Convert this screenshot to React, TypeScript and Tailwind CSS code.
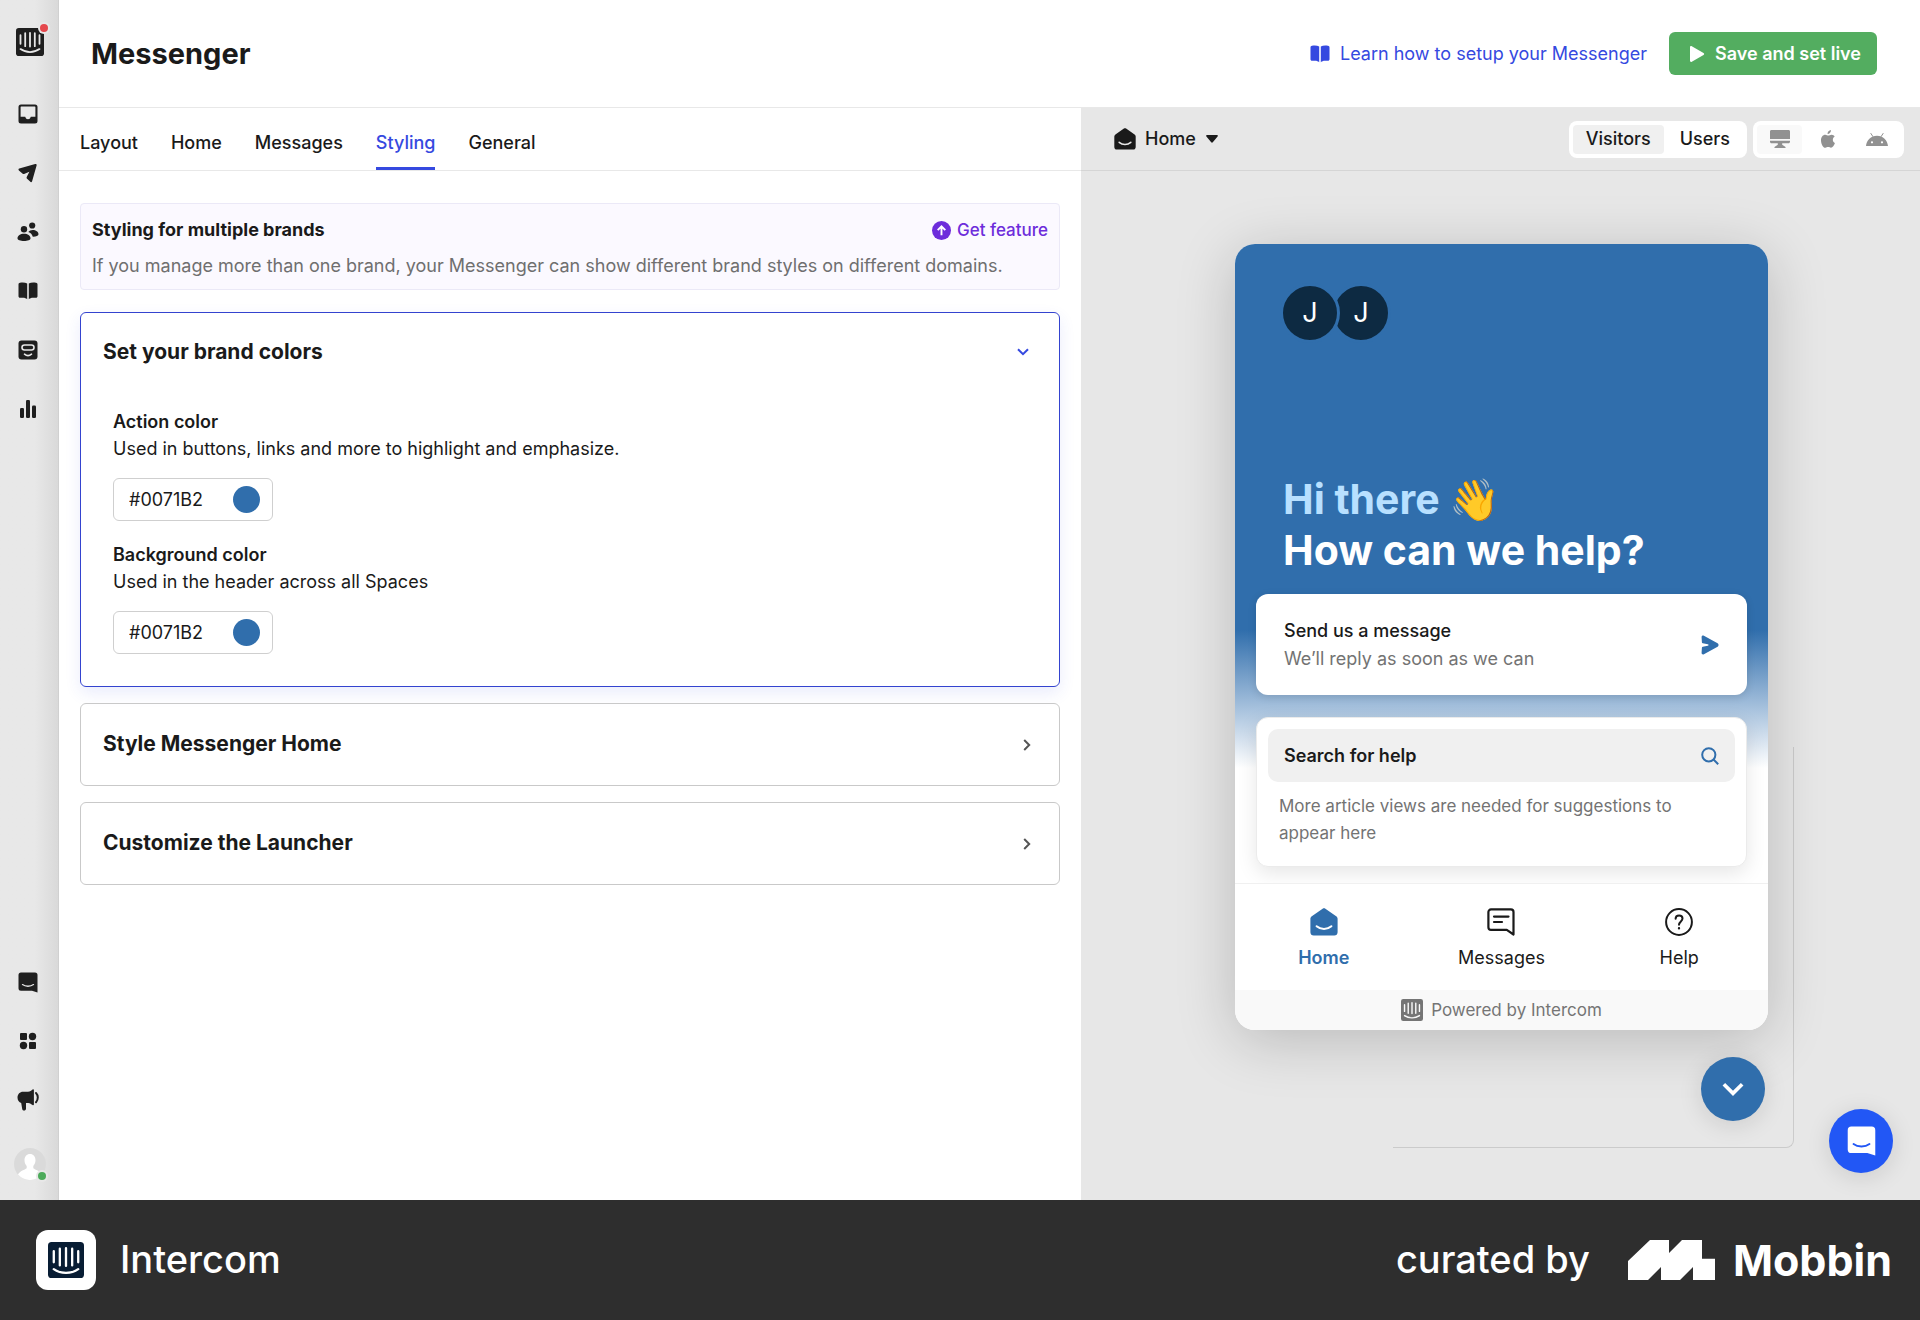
import React, { useState } from 'react';

type IconProps = { className?: string };

const IntercomLogo = ({ className }: IconProps) => (
  <svg viewBox="0 0 28 28" className={className} fill="none" aria-hidden="true">
    <rect width="28" height="28" rx="2.800" fill="currentColor" />
    <g className="stroke-[var(--cut)]" strokeWidth="1.800" strokeLinecap="round">
      <path d="M4.500 7.200v8.600M9.200 5.200v13M14 4.800v13.800M18.800 5.200v13M23.500 7.200v8.600" />
      <path d="M4.500 21.100c5.400 3.900 13.600 3.900 19 0" />
    </g>
  </svg>
);

const InboxIcon = ({ className }: IconProps) => (
  <svg viewBox="0 0 20 20" className={className} aria-hidden="true">
    <path
      fill="currentColor"
      fillRule="evenodd"
      d="M3 .5h14A2.500 2.500 0 0 1 19.500 3v14a2.500 2.500 0 0 1-2.500 2.500H3A2.500 2.500 0 0 1 .5 17V3A2.500 2.500 0 0 1 3 .5zM2.600 3v9.800h4.600c.5 1.700 1.500 2.500 2.800 2.500s2.300-.8 2.800-2.500h4.600V3a.6.6 0 0 0-.6-.6H3.200a.6.6 0 0 0-.6.600z"
    />
  </svg>
);

const OutboundIcon = ({ className }: IconProps) => (
  <svg viewBox="0 0 20 20" className={className} fill="currentColor" aria-hidden="true">
    <path d="M1.300 5.600 17.200 1.100c1-.3 1.700.4 1.400 1.400l-4.500 15.800c-.3 1-1.400 1.100-2 .3l-3.300-3.200c-.3-.5-.3-.9-.1-1.400l2.700-5.300-5.300 2.300c-.6.200-1 .1-1.400-.3L.9 7.500c-.7-.7-.5-1.600.4-1.900z" />
  </svg>
);

const ContactsIcon = ({ className }: IconProps) => (
  <svg viewBox="0 0 22 20" className={className} fill="currentColor" aria-hidden="true">
    <circle cx="7" cy="7.200" r="3.200" />
    <circle cx="15.200" cy="3.500" r="3.100" />
    <path d="M.5 16.300c0-2.500 2.800-4.500 6.500-4.500s6.500 2 6.500 4.500c0 1.800-2.900 2.700-6.500 2.700S.5 18.100.500 16.300z" />
    <path d="M11.300 10c1-1.100 2.500-1.900 4.400-1.900 3.200 0 5.800 1.900 5.800 4.200 0 1.500-2.400 2.600-5.700 2.500-.6-2.400-2.100-4-4.500-4.800z" />
  </svg>
);

const BookIcon = ({ className }: IconProps) => (
  <svg viewBox="0 0 20 18" className={className} fill="currentColor" aria-hidden="true">
    <path d="M2 .8c3-.5 5.500-.2 7.200.8v15.600c-1.200-1-2.500-1.500-4-1.500H2c-.9 0-1.500-.6-1.500-1.500V2.400C.5 1.500 1.100.9 2 .8z" />
    <path d="M18 .8c-3-.5-5.500-.2-7.200.8v15.600c1.200-1 2.500-1.500 4-1.500H18c.9 0 1.500-.6 1.500-1.500V2.400c0-.9-.6-1.500-1.500-1.600z" />
  </svg>
);

const OperatorIcon = ({ className }: IconProps) => (
  <svg viewBox="0 0 20 20" className={className} fill="none" aria-hidden="true">
    <rect x=".5" y=".5" width="19" height="19" rx="3" fill="currentColor" />
    <rect x="4" y="5" width="12" height="5" rx="2.500" stroke="#e8e8e8" strokeWidth="1.600" />
    <path d="M6.500 14.200c2 1.700 5 1.700 7 0" stroke="#e8e8e8" strokeWidth="1.600" strokeLinecap="round" />
  </svg>
);

const ReportsIcon = ({ className }: IconProps) => (
  <svg viewBox="0 0 18 20" className={className} fill="currentColor" aria-hidden="true">
    <rect x="1" y="9" width="4" height="10" rx="1.200" />
    <rect x="7" y="1" width="4" height="18" rx="1.200" />
    <rect x="13" y="6.500" width="4" height="12.500" rx="1.200" />
  </svg>
);

const MessengerIcon = ({ className }: IconProps) => (
  <svg viewBox="0 0 20 21" className={className} fill="none" aria-hidden="true">
    <path
      d="M3 .5h14A2.500 2.500 0 0 1 19.500 3v17.500L14 18.800H3A2.500 2.500 0 0 1 .5 16.300V3A2.500 2.500 0 0 1 3 .5z"
      fill="currentColor"
    />
    <path
      d="M4.500 12.600c2.900 2.200 8 2.200 11 0"
      className="stroke-[var(--cut)]"
      strokeWidth="1.300"
      strokeLinecap="round"
    />
  </svg>
);

const AppsIcon = ({ className }: IconProps) => (
  <svg viewBox="0 0 18 18" className={className} fill="currentColor" aria-hidden="true">
    <rect x="1" y="1" width="7" height="7" rx="1" />
    <circle cx="13.500" cy="4.500" r="3.700" />
    <circle cx="4.500" cy="13.500" r="3.700" />
    <rect x="10" y="10" width="7" height="7" rx="1" />
  </svg>
);

const MegaphoneIcon = ({ className }: IconProps) => (
  <svg viewBox="0 0 22 22" className={className} fill="none" aria-hidden="true">
    <path
      d="M6 2.800h5c2-.2 3.500-1 4.600-2.200.5-.5 1.300-.2 1.300.5v14.500c0 .7-.8 1-1.300.5-1.200-1.200-2.600-1.900-4.300-2.200H9v5.800c0 2.300-3.400 2.400-3.800.2L4.200 14C2 13.300.5 11.200.5 8.500.5 5.200 3 2.800 6 2.800z"
      fill="currentColor"
    />
    <path d="M19 4c2.400 2.400 2.400 6.700 0 9.200" stroke="currentColor" strokeWidth="2" strokeLinecap="round" />
  </svg>
);

const HomeIcon = ({ className }: IconProps) => (
  <svg viewBox="0 0 28 28" className={className} fill="none" aria-hidden="true">
    <path
      d="M12.600.7c.9-.6 1.900-.6 2.800 0l10.800 7.600c1 .7 1.400 1.500 1.400 2.600v13.300c0 2-1.300 3.300-3.300 3.300H3.700c-2 0-3.300-1.300-3.300-3.300V10.900c0-1.100.5-1.900 1.400-2.600z"
      fill="currentColor"
    />
    <path
      d="M6.600 18.200c4.200 3.600 10.600 3.600 14.800 0"
      className="stroke-[var(--cut)]"
      strokeWidth="2"
      strokeLinecap="round"
    />
  </svg>
);

const MessagesIcon = ({ className }: IconProps) => (
  <svg viewBox="0 0 28 28" className={className} fill="none" stroke="currentColor" strokeWidth="2.200" aria-hidden="true">
    <path d="M26.500 26.500V4a2.600 2.600 0 0 0-2.600-2.600H4A2.600 2.600 0 0 0 1.400 4v15.300A2.600 2.600 0 0 0 4 21.900h15.800z" strokeLinejoin="round" />
    <path d="M7 8.600h14.500M7 14h8" strokeLinecap="round" />
  </svg>
);

const HelpIcon = ({ className }: IconProps) => (
  <svg viewBox="0 0 28 28" className={className} fill="none" stroke="currentColor" strokeWidth="2" strokeLinecap="round" aria-hidden="true">
    <circle cx="14" cy="14" r="12.900" />
    <path d="M10.600 10.800c0-2 1.500-3.300 3.500-3.300s3.400 1.300 3.400 3.100c0 2.700-3.500 3-3.500 6.200" />
    <circle cx="14" cy="20.300" r=".6" fill="currentColor" strokeWidth="1.200" />
  </svg>
);

const DesktopIcon = ({ className }: IconProps) => (
  <svg viewBox="0 0 20 18" className={className} fill="currentColor" aria-hidden="true">
    <path d="M1.500 0h17c.8 0 1.500.6 1.500 1.400V9H0V1.400C0 .6.7 0 1.500 0zM0 10.800h20v.9c0 .8-.7 1.500-1.500 1.500h-6.300v1.600l3 2c.9.600.6 1.200-.2 1.200H5c-.8 0-1.100-.6-.2-1.200l3-2v-1.600H1.500c-.8 0-1.500-.7-1.500-1.500z" />
  </svg>
);

const AppleIcon = ({ className }: IconProps) => (
  <svg viewBox="0 0 16 20" className={className} fill="currentColor" aria-hidden="true">
    <path d="M11.300 0c.2 2.300-1.700 4.500-3.800 4.400C7.300 2.300 9.200.2 11.300 0zM15.700 14.500c-.9 2.500-2.600 5.300-4.400 5.300-1.200 0-1.600-.8-3.100-.8-1.500 0-2 .8-3.100.8C2.700 19.900.2 15.300.2 11.300.2 7.700 2.500 5.300 5 5.300c1.300 0 2.300.9 3.400.9 1 0 2.100-1 3.800-.9 1.300.1 2.500.7 3.200 1.800-2.900 1.800-2.500 6 .3 7.400z" />
  </svg>
);

const AndroidIcon = ({ className }: IconProps) => (
  <svg viewBox="0 0 22 13" className={className} aria-hidden="true">
    <path d="M6.800 3.400 4.900.5M15.200 3.400l1.900-2.900" stroke="currentColor" strokeWidth="1" strokeLinecap="round" />
    <path
      fill="currentColor"
      fillRule="evenodd"
      d="M0 13C.4 7 5 2.700 11 2.700S21.600 7 22 13zM6 8.200a1.100 1.100 0 1 0 0 2.200 1.100 1.100 0 0 0 0-2.200zm10 0a1.100 1.100 0 1 0 0 2.200 1.100 1.100 0 0 0 0-2.200z"
    />
  </svg>
);

const Chevron = ({ className }: IconProps) => (
  <svg viewBox="0 0 12 8" className={className} fill="none" stroke="currentColor" strokeWidth="2" aria-hidden="true">
    <path d="m1 1.200 5 5 5-5" />
  </svg>
);

const navItems = [
  { label: 'Inbox', icon: <InboxIcon className="size-5" /> },
  { label: 'Outbound', icon: <OutboundIcon className="size-5" /> },
  { label: 'Contacts', icon: <ContactsIcon className="h-5 w-[22px]" /> },
  { label: 'Articles', icon: <BookIcon className="h-[18px] w-5" /> },
  { label: 'Operator', icon: <OperatorIcon className="size-5" /> },
  { label: 'Reports', icon: <ReportsIcon className="h-5 w-[18px]" /> },
];

const bottomItems = [
  { label: 'Messenger', icon: <MessengerIcon className="h-[21px] w-5" /> },
  { label: 'App store', icon: <AppsIcon className="size-[18px]" /> },
  { label: 'What is new', icon: <MegaphoneIcon className="size-[22px]" /> },
];

const tabs = ['Layout', 'Home', 'Messages', 'Styling', 'General'];

const Sidebar = () => (
  <nav className="flex w-[59px] shrink-0 flex-col items-center border-r border-[#d0d0d0] bg-linear-to-r from-[#e8e8e8] from-60% to-[#d9d9d9] pt-7 pr-[2px] pb-5 text-[#1f1f1f] [--cut:#e8e8e8]">
    <a href="#home" aria-label="Intercom" className="relative ml-[3px] block">
      <IntercomLogo className="size-7" />
      <span className="absolute -top-1 -right-1 size-2 rounded-full bg-[#e5484d] ring-2 ring-[#e8e8e8]" />
    </a>
    <div className="mt-[38px] flex flex-col gap-[19px]">
      {navItems.map((item) => (
        <a key={item.label} href="#nav" aria-label={item.label} className="flex size-10 items-center justify-center">
          {item.icon}
        </a>
      ))}
    </div>
    <div className="mt-auto flex flex-col gap-[19px]">
      {bottomItems.map((item) => (
        <a key={item.label} href="#nav" aria-label={item.label} className="flex size-10 items-center justify-center">
          {item.icon}
        </a>
      ))}
    </div>
    <button type="button" aria-label="Profile" className="relative mt-7 ml-[3px]">
      <svg viewBox="0 0 32 32" className="size-8" aria-hidden="true">
        <circle cx="16" cy="16" r="16" fill="#dadada" />
        <path
          d="M16 6c3.300 0 5.500 2.600 5.500 6.200 0 2.500-1 4.300-2.200 5.700v2.300c2 1.700 6.600 2.400 8.700 6.400A16 16 0 0 1 4 26.600c2-4 6.700-4.700 8.700-6.400v-2.300c-1.300-1.400-2.200-3.200-2.200-5.700C10.500 8.600 12.700 6 16 6z"
          fill="#fff"
        />
      </svg>
      <span className="absolute right-0 bottom-0 size-2 rounded-full bg-[#4dab5b] ring-2 ring-[#e8e8e8]" />
    </button>
  </nav>
);

const ColorField = ({ id, label, hint }: { id: string; label: string; hint: string }) => {
  const [value, setValue] = useState('#0071B2');

  return (
    <div>
      <label htmlFor={id} className="block leading-[27px] font-semibold">
        {label}
      </label>
      <p className="leading-[27px]">{hint}</p>
      <div className="mt-4 flex h-[43px] w-40 items-center rounded-md border border-[#cfcfcf] pr-3 pl-[15px]">
        <input
          id={id}
          value={value}
          onChange={(e) => setValue(e.target.value)}
          className="w-full min-w-0 bg-transparent outline-none"
        />
        <span className="size-[27px] shrink-0 rounded-full bg-[#306eac]" />
      </div>
    </div>
  );
};

const CollapsedSection = ({ title }: { title: string }) => (
  <button
    type="button"
    className="flex h-[83px] w-full items-center justify-between rounded-md border border-[#c9c9c9] pr-[26px] pl-[22px] text-left"
  >
    <span className="text-[21px] font-bold">{title}</span>
    <Chevron className="w-3 -rotate-90 text-[#555]" />
  </button>
);

const MessengerPreview = () => (
  <div className="w-[533px] overflow-hidden rounded-[20px] bg-white shadow-[0_10px_60px_rgba(0,0,0,0.2)] [--cut:#fff]">
    <div className="bg-[linear-gradient(180deg,#306eac_0,#306eac_386px,#a9c3de_466px,#fff_524px)] px-[21px] pt-[39px] pb-4">
      <div className="flex px-6 text-[27px] text-white">
        <span className="z-10 flex size-[60px] items-center justify-center rounded-full border-3 border-[#306eac] bg-[#0d2a42]">
          J
        </span>
        <span className="-ml-[9px] flex size-[60px] items-center justify-center rounded-full border-3 border-[#306eac] bg-[#0d2a42]">
          J
        </span>
      </div>
      <h2 className="mt-[131px] px-[27px] text-[41px] leading-[51px] font-bold text-white">
        <span className="text-[#b8e0ff]">Hi there 👋</span>
        <br />
        How can we help?
      </h2>
      <button
        type="button"
        className="mt-[18px] flex h-[101px] w-full items-center justify-between rounded-xl bg-white px-7 text-left shadow-[0_2px_8px_rgba(0,0,0,0.12)]"
      >
        <span>
          <span className="block leading-7 font-medium">Send us a message</span>
          <span className="block leading-7 text-[#737373]">We’ll reply as soon as we can</span>
        </span>
        <svg viewBox="0 0 18 20" className="h-5 w-[18px] text-[#306eac]" fill="currentColor" aria-hidden="true">
          <path d="M.6 2.200C.5.800 1.700.1 2.900.700l13.700 7.600c1.300.7 1.300 2.700 0 3.400L2.900 19.300c-1.200.6-2.400-.1-2.300-1.500l.3-5.100c0-.6.4-.9.900-1l5-.9c1-.2 1-1.400 0-1.600l-5-.9c-.5-.1-.9-.4-.9-1z" />
        </svg>
      </button>
      <div className="mt-[22px] rounded-xl border border-[#ebebeb] bg-white p-[11px] shadow-[0_6px_20px_rgba(0,0,0,0.1)]">
        <button
          type="button"
          className="flex h-[53px] w-full items-center justify-between rounded-[10px] bg-[#f0f0f0] px-4 text-left font-semibold"
        >
          Search for help
          <svg viewBox="0 0 18 18" className="size-[18px] text-[#306eac]" fill="none" stroke="currentColor" strokeWidth="2" aria-hidden="true">
            <circle cx="7.800" cy="7.800" r="6.600" />
            <path d="m12.500 12.500 4.700 4.700" />
          </svg>
        </button>
        <p className="px-[11px] pt-[11px] pb-2 text-[17px] leading-[27px] text-[#737373]">
          More article views are needed for suggestions to appear here
        </p>
      </div>
    </div>
    <div className="grid grid-cols-3 border-t border-[#f0f0f0] bg-white pt-6 pb-[18px]">
      <button type="button" className="flex flex-col items-center gap-2 font-semibold text-[#306eac]">
        <HomeIcon className="size-7" />
        Home
      </button>
      <button type="button" className="flex flex-col items-center gap-2">
        <MessagesIcon className="size-7" />
        Messages
      </button>
      <button type="button" className="flex flex-col items-center gap-2">
        <HelpIcon className="size-7" />
        Help
      </button>
    </div>
    <div className="flex h-10 items-center justify-center gap-2 bg-[#f9f9f9] text-[17px] text-[#757575] [--cut:#f9f9f9]">
      <IntercomLogo className="size-[22px]" />
      Powered by Intercom
    </div>
  </div>
);

const PreviewPanel = () => (
  <section className="relative flex flex-1 flex-col bg-[#e7e7e7]">
    <div className="flex h-[63px] items-center justify-between border-b border-[#d5d5d5] pr-4 pl-[33px]">
      <button type="button" className="flex items-center gap-[9px] font-medium [--cut:#e7e7e7]">
        <HomeIcon className="size-[22px]" />
        Home
        <svg viewBox="0 0 12 8" className="ml-px h-2 w-3" fill="currentColor" aria-hidden="true">
          <path d="M1 0h10c.8 0 1.200.8.6 1.400L6.800 7.300c-.4.500-1.200.5-1.600 0L.4 1.400C-.2.800.2 0 1 0z" />
        </svg>
      </button>
      <div className="flex gap-[6px]">
        <div className="flex rounded-lg bg-white p-1 font-medium">
          <button type="button" className="h-[29px] rounded-sm bg-[#f0f0f0] px-[13px]">
            Visitors
          </button>
          <button type="button" className="h-[29px] pr-[13px] pl-4">
            Users
          </button>
        </div>
        <div className="flex rounded-lg bg-white p-1 text-[#919191]">
          <button type="button" aria-label="Web" className="flex h-[29px] w-[45px] items-center justify-center rounded-sm bg-[#f9f9f9]">
            <DesktopIcon className="h-[18px] w-5" />
          </button>
          <button type="button" aria-label="iOS" className="flex h-[29px] w-[52px] items-center justify-center">
            <AppleIcon className="h-[18px] w-4" />
          </button>
          <button type="button" aria-label="Android" className="flex h-[29px] w-[46px] items-center justify-center">
            <AndroidIcon className="h-[13px] w-[22px]" />
          </button>
        </div>
      </div>
    </div>
    {/* corner of the visitor's browser window */}
    <div className="absolute right-[126px] bottom-[52px] size-[401px] rounded-br-lg border-r border-b border-[#cbcbcb]" />
    <div className="relative mt-[73px] mr-[152px] mb-12 flex flex-col items-end">
      <MessengerPreview />
      <button
        type="button"
        aria-label="Close messenger"
        className="mt-[27px] mr-[3px] flex size-16 items-center justify-center rounded-full bg-[#306eac] text-white shadow-[0_4px_24px_rgba(0,0,0,0.12)]"
      >
        <Chevron className="w-[22px]" />
      </button>
    </div>
    <button
      type="button"
      aria-label="Open chat"
      className="absolute right-[27px] bottom-[27px] flex size-16 items-center justify-center rounded-full bg-[#2257f5] text-white shadow-[0_4px_24px_rgba(0,0,0,0.12)] [--cut:#2257f5]"
    >
      <MessengerIcon className="h-8 w-[29px]" />
    </button>
  </section>
);

const StylingSettings = () => {
  const [activeTab, setActiveTab] = useState('Styling');

  return (
    <section className="w-[1022px] shrink-0">
      <div className="flex h-[63px] gap-[33px] border-b border-[#e8e8e8] px-[21px]">
        {tabs.map((tab) => (
          <button
            key={tab}
            type="button"
            onClick={() => setActiveTab(tab)}
            className={
              tab === activeTab
                ? 'border-b-3 border-[#3549e0] pt-[10px] font-medium text-[#3549e0]'
                : 'border-b-3 border-transparent pt-[10px] font-medium'
            }
          >
            {tab}
          </button>
        ))}
      </div>
      <div className="flex flex-col px-[21px] pt-8">
        <div className="rounded-sm border border-[#ebe9f7] bg-[#fbf9ff] px-[11px] pt-3 pb-[9px]">
          <div className="flex items-center justify-between">
            <h2 className="leading-7 font-bold">Styling for multiple brands</h2>
            <a href="#upgrade" className="flex items-center gap-[6px] text-[17px] font-medium text-[#6d2ddb]">
              <svg viewBox="0 0 20 20" className="size-[19px]" fill="none" aria-hidden="true">
                <circle cx="10" cy="10" r="10" fill="currentColor" />
                <path d="M10 15V5.800M6 9.600l4-4 4 4" stroke="#fff" strokeWidth="2" />
              </svg>
              Get feature
            </a>
          </div>
          <p className="mt-2 leading-7 text-[#6f6f6f]">
            If you manage more than one brand, your Messenger can show different brand styles on different domains.
          </p>
        </div>
        <div className="mt-[22px] rounded-md border border-[#3443cf] px-[22px] pt-[23px] pb-8 shadow-[0_6px_16px_rgba(53,73,224,0.1)]">
          <button type="button" className="flex w-full items-center justify-between pr-2 text-left">
            <span className="text-[21px] leading-8 font-bold">Set your brand colors</span>
            <Chevron className="w-3 text-[#3549e0]" />
          </button>
          <div className="mt-10 flex flex-col gap-5 px-[10px]">
            <ColorField id="action-color" label="Action color" hint="Used in buttons, links and more to highlight and emphasize." />
            <ColorField id="background-color" label="Background color" hint="Used in the header across all Spaces" />
          </div>
        </div>
        <div className="mt-4 flex flex-col gap-4">
          <CollapsedSection title="Style Messenger Home" />
          <CollapsedSection title="Customize the Launcher" />
        </div>
      </div>
    </section>
  );
};

const Attribution = () => (
  <footer className="flex h-[120px] items-center justify-between bg-[#2e2e2e] pr-7 pl-9 text-[38px] font-medium text-white">
    <div className="flex items-center gap-6">
      <span className="flex size-[60px] items-center justify-center rounded-xl bg-white text-[#081d34] [--cut:#fff]">
        <IntercomLogo className="size-9" />
      </span>
      Intercom
    </div>
    <div className="flex items-center gap-[38px]">
      curated by
      <span className="flex items-center gap-[18px] text-[43px] font-bold">
        <svg viewBox="0 0 87 40" className="h-10 w-[87px]" fill="currentColor" aria-hidden="true">
          <path d="M0 21 22 0h19v13L54 0h20v18.700h13V40H65V27L52 40H33V27L20 40H0z" />
        </svg>
        Mobbin
      </span>
    </div>
  </footer>
);

export default function App() {
  return (
    <div className="flex min-h-screen flex-col bg-white font-['Inter',sans-serif] text-lg text-[#1a1a1a]">
      <div className="flex flex-1">
        <Sidebar />
        <main className="flex flex-1 flex-col">
          <header className="flex h-[108px] items-center justify-between border-b border-[#e8e8e8] pr-[43px] pl-8">
            <h1 className="text-[29px] font-bold">Messenger</h1>
            <div className="flex items-center gap-[22px]">
              <a href="#learn" className="flex items-center gap-[10px] text-[#3549e0]">
                <BookIcon className="h-[18px] w-5" />
                Learn how to setup your Messenger
              </a>
              <button
                type="button"
                className="flex h-[43px] items-center gap-[10px] rounded-md bg-[#53ad60] pr-4 pl-5 font-semibold text-white"
              >
                <svg viewBox="0 0 16 18" className="h-[18px] w-4" fill="currentColor" aria-hidden="true">
                  <path d="M2.800 1.300 14.500 8c.9.5.9 1.500 0 2L2.800 16.700c-.9.500-1.800 0-1.800-1V2.300c0-1 .9-1.500 1.800-1z" />
                </svg>
                Save and set live
              </button>
            </div>
          </header>
          <div className="flex flex-1">
            <StylingSettings />
            <PreviewPanel />
          </div>
        </main>
      </div>
      <Attribution />
    </div>
  );
}
